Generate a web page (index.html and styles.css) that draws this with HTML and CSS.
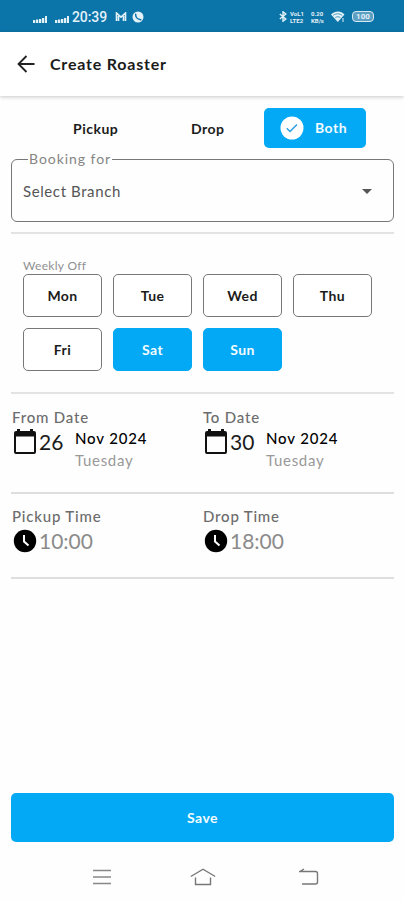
FILE: index.html
```html
<!DOCTYPE html>
<html lang="en">
<head>
<meta charset="utf-8">
<title>Create Roaster</title>
<link rel="stylesheet" href="styles.css">
</head>
<body>
<div class="status">
  <div class="status-left">
    <svg width="14" height="7" viewBox="0 0 14 7" fill="currentColor"><path d="M0 4h2.300v3H0zM3 3.500h2.300V7H3zM6 3h2.300v4H6zM9 2h2.300v5H9zM12 0h2v7h-2z"/></svg>
    <svg width="14" height="7" viewBox="0 0 14 7" fill="currentColor"><path d="M0 4h2.300v3H0zM3 3.500h2.300V7H3zM6 3h2.300v4H6zM9 2h2.300v5H9zM12 0h2v7h-2z"/></svg>
    <span class="clock">20:39</span>
    <svg class="mail" width="12" height="10" viewBox="0 0 12 10" fill="none" stroke="currentColor" stroke-width="1.6"><path d="M1.5 9V1L6 5.2 10.500 1v8M3.500 9V4M8.500 9V4"/></svg>
    <svg class="call" width="12" height="12" viewBox="0 0 12 12"><circle cx="6" cy="6" r="5.500" fill="currentColor"/><path d="M3.600 3.200c0 3 2.200 5.300 5.200 5.500" fill="none" stroke="#0b74a8" stroke-width="1.500" stroke-linecap="round"/></svg>
  </div>
  <div class="status-right">
    <svg width="8" height="11" viewBox="0 0 8 11" fill="none" stroke="currentColor" stroke-width="1.400"><path d="M.8 3l6 5L4 10.200V.8L6.800 3l-6 5"/></svg>
    <span class="tiny volte"><span>VoL1</span><span>LTE2</span></span>
    <span class="tiny speed"><span>0.20</span><span>KB/s</span></span>
    <svg class="wifi" width="14" height="11" viewBox="0 0 14 11"><path d="M0 3.500C4-.5 10-.5 13.500 3.500L6.800 11z" fill="currentColor"/><path d="M2.200 4.300c3-2 6-2 9 0M4.300 6.500c1.700-1 3.300-1 5 0" fill="none" stroke="#0b74a8" stroke-width=".7"/><path d="M12 7v4" stroke="currentColor"/></svg>
    <span class="battery">100</span>
  </div>
</div>
<header class="bar">
  <svg width="18" height="18" viewBox="0 0 18 18" fill="none" stroke="#222" stroke-width="1.800"><path d="M17.500 9H1.500M9.500 1l-8 8 8 8"/></svg>
  <h1>Create Roaster</h1>
</header>
<main>
  <div class="tabs">
    <span class="tab pickup">Pickup</span>
    <span class="tab drop">Drop</span>
    <button class="tab both"><svg width="24" height="24" viewBox="0 0 24 24"><circle cx="12" cy="12" r="11.500" fill="#fff"/><path d="M6.800 12.300l3.200 3.200 7-7" fill="none" stroke="#2a9fe0" stroke-width="1.500"/></svg><span>Both</span></button>
  </div>
  <fieldset class="branch">
    <legend>Booking for</legend>
    <div class="select"><span>Select Branch</span><i class="caret"></i></div>
  </fieldset>
  <section class="week">
    <div class="week-label">Weekly Off</div>
    <div class="days">
      <button>Mon</button><button>Tue</button><button>Wed</button><button>Thu</button>
      <button>Fri</button><button class="on">Sat</button><button class="on">Sun</button>
    </div>
  </section>
  <section class="dates">
    <div class="col">
      <div class="label from">From Date</div>
      <div class="date">
        <svg width="24" height="26" viewBox="0 0 24 26"><path d="M4 0h3v2h10V0h3v2h1q2 0 2 2v19q0 2-2 2H3q-2 0-2-2V4q0-2 2-2h1zM3 7.500V23h18V7.500z" fill="#111" fill-rule="evenodd"/></svg>
        <span class="num">26</span>
        <div class="month"><b>Nov 2024</b><span>Tuesday</span></div>
      </div>
    </div>
    <div class="col">
      <div class="label to">To Date</div>
      <div class="date">
        <svg width="24" height="26" viewBox="0 0 24 26"><path d="M4 0h3v2h10V0h3v2h1q2 0 2 2v19q0 2-2 2H3q-2 0-2-2V4q0-2 2-2h1zM3 7.500V23h18V7.500z" fill="#111" fill-rule="evenodd"/></svg>
        <span class="num">30</span>
        <div class="month"><b>Nov 2024</b><span>Tuesday</span></div>
      </div>
    </div>
  </section>
  <section class="times">
    <div class="col">
      <div class="label ptime">Pickup Time</div>
      <div class="time"><svg width="24" height="24" viewBox="0 0 24 24"><circle cx="12" cy="12" r="11.200" fill="#000"/><path d="M11 6v6.500l4.500 4" fill="none" stroke="#fff" stroke-width="2"/></svg><span>10:00</span></div>
    </div>
    <div class="col">
      <div class="label dtime">Drop Time</div>
      <div class="time"><svg width="24" height="24" viewBox="0 0 24 24"><circle cx="12" cy="12" r="11.200" fill="#000"/><path d="M11 6v6.500l4.500 4" fill="none" stroke="#fff" stroke-width="2"/></svg><span>18:00</span></div>
    </div>
  </section>
  <button class="save">Save</button>
</main>
<nav>
  <svg width="20" height="18" viewBox="0 0 20 18" fill="none" stroke="#888" stroke-width="1.500"><path d="M1 2.500h18M1 9h18M1 15.500h18"/></svg>
  <svg class="home" width="26" height="18" viewBox="0 0 26 18" fill="none" stroke="#777" stroke-width="1.400"><path d="M.8 8.500L13 1.200l12.200 7.300M5.500 9.500v7h15v-7"/></svg>
  <svg width="20" height="18" viewBox="0 0 20 18" fill="none" stroke="#777" stroke-width="1.400"><path d="M1 3.500h15.500q2 0 2 2v8.500q0 2-2 2H3M5 1L1 3.500h4"/></svg>
</nav>
</body>
</html>
```
FILE: styles.css
```css
* { box-sizing: border-box; }
body {
  margin: 0;
  width: 404px;
  height: 900px;
  display: flex;
  flex-direction: column;
  overflow: hidden;
  background: #fefefe;
  color: #1b1b1b;
  font: 14px/20px Lato, sans-serif;
}
svg { display: block; flex: none; }
button { font: inherit; padding: 0; margin: 0; border: 0; color: inherit; }

.status {
  height: 32px;
  flex: none;
  display: flex;
  justify-content: space-between;
  padding: 1px 30px 0 33px;
  background: #0b74a8;
  color: #e3f1f8;
}
.status-left, .status-right { display: flex; align-items: center; }
.status-left svg:nth-child(1) { margin: 5px 8px 0 0; }
.status-left svg:nth-child(2) { margin-top: 5px; }
.clock { margin-left: 3px; width: 35px; font: 500 14px/20px Roboto, sans-serif; letter-spacing: -.1px; }
.mail { margin-left: 8px; }
.call { margin-left: 5px; }
.tiny { display: flex; flex-direction: column; font: 700 6px/7px Roboto, sans-serif; white-space: nowrap; }
.volte { width: 17px; margin-left: 3px; }
.speed { width: 14px; margin-left: 4px; }
.wifi { margin-left: 6px; }
.battery {
  width: 22px;
  height: 11px;
  margin-left: 7px;
  border: 1px solid #d6e9f3;
  border-radius: 4px;
  font: 700 8px/9px Roboto, sans-serif;
  text-align: center;
  background: #5d9fc2;
}

.bar {
  height: 64px;
  flex: none;
  display: flex;
  align-items: center;
  padding-left: 17px;
  background: #fff;
  box-shadow: 0 1px 4px rgba(0, 0, 0, .22);
}
h1 { margin: 0 0 0 15px; font-size: 16px; line-height: 20px; font-weight: 700; letter-spacing: .8px; }

main { flex: 1; display: flex; flex-direction: column; padding: 12px 10px 0 11px; }
.tabs { height: 40px; display: flex; align-items: center; font-weight: 700; letter-spacing: .5px; }
.tab { padding-top: 1px; }
.pickup { width: 118px; padding-left: 62px; }
.drop { width: 135px; padding-left: 62px; }
.both {
  width: 102px;
  height: 40px;
  display: flex;
  align-items: center;
  padding: 0 0 0 16px;
  gap: 11px;
  border-radius: 5px;
  background: #03a9f4;
  color: #f2fbff;
  letter-spacing: .5px;
}

.branch {
  height: 73px;
  min-width: 0;
  margin: 1px 0 0;
  padding: 0 21px 0 11px;
  border: 1px solid #777;
  border-radius: 6px;
}
legend { margin-left: 5px; padding: 0 1px; color: #858585; line-height: 20px; letter-spacing: .95px; }
.select { height: 44px; display: flex; align-items: center; justify-content: space-between; color: #555; font-size: 15px; letter-spacing: .6px; }
.caret { border: 5px solid transparent; border-top-color: #555; border-bottom: 0; }

.week { height: 162px; margin-top: 10px; padding: 24px 11px 0 12px; border: solid #e3e3e3; border-width: 2px 0; }
.week-label { height: 16px; font-size: 12px; line-height: 16px; color: #909090; letter-spacing: .3px; }
.days { display: grid; grid-template-columns: repeat(4, 79px); gap: 11px; }
.days button {
  height: 43px;
  padding-top: 1px;
  border: 1px solid #777;
  border-radius: 5px;
  background: #fff;
  font-weight: 700;
  letter-spacing: .4px;
}
.days .on { background: #03a9f4; border-color: #03a9f4; color: #f2fbff; }

.dates, .times { display: grid; grid-template-columns: 191px 191px; border-bottom: 2px solid #dedede; }
.dates { height: 100px; padding-top: 13px; }
.times { height: 85px; padding-top: 12px; }
.col { padding-left: 1px; }
.label { color: #6c6c6c; font-size: 15px; line-height: 20px; font-weight: 500; letter-spacing: .8px; }
.date { display: flex; align-items: flex-start; padding: 2px 0 0 1px; }
.num { width: 36px; margin-left: 2px; font-size: 21px; line-height: 26px; }
.month { display: flex; flex-direction: column; line-height: 22px; margin-top: -1px; }
.month b { font-size: 15px; font-weight: 500; letter-spacing: .85px; line-height: 21px; color: #000; }
.month span { color: #999; font-size: 15px; letter-spacing: .7px; }
.time { display: flex; align-items: center; padding: 3px 0 0 1px; color: #8b8b8b; }
.time span { margin-left: 2px; font-size: 21px; line-height: 24px; }

.save {
  height: 49px;
  margin-top: auto;
  border-radius: 5px;
  background: #03a9f4;
  color: #f2fbff;
  font-weight: 700;
  letter-spacing: .5px;
}
nav { height: 58px; flex: none; display: flex; align-items: flex-start; padding: 26px 85px 0 92px; justify-content: space-between; }
.home { margin-right: 6px; }
```
